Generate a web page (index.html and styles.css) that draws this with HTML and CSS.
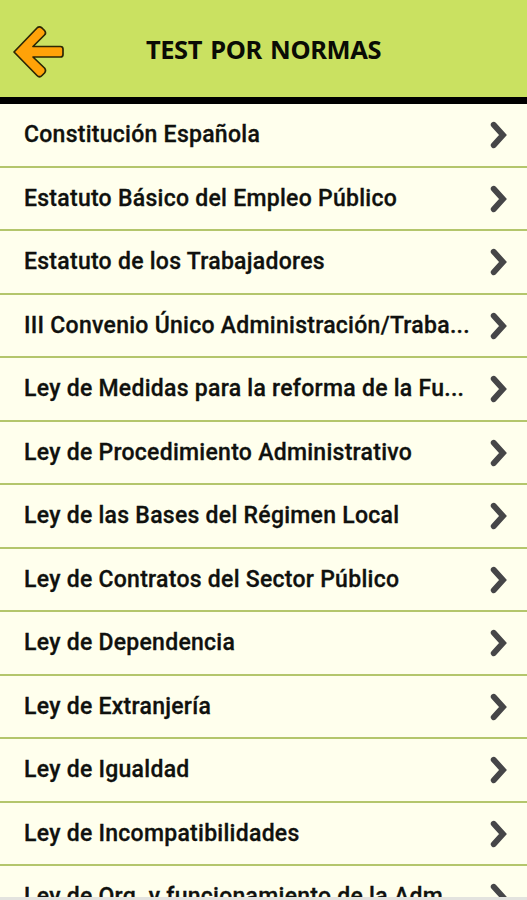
FILE: index.html
```
<!DOCTYPE html>
<html lang="es">
<head>
<meta charset="utf-8">
<title>Test por normas</title>
<link rel="stylesheet" href="styles.css">
</head>
<body>
<svg class="defs" width="0" height="0"><symbol id="chevron" viewBox="0 0 20 28"><path d="M4.7 3.7 14 14 4.7 24.3" fill="none" stroke="#464648" stroke-width="5.8" stroke-linecap="round" stroke-linejoin="miter"/></symbol></svg>
<div class="screen">
<header class="header">
<svg class="back" viewBox="0 0 54 54"><path d="M2 27 L25.5 2.5 Q27.5 .8 30 3 L32.5 5.5 Q34.5 8 32.5 10 L21 21.5 H48.5 Q51 21.5 51 24 V29.5 Q51 32 48.5 32 H21 L32.5 43 Q34.5 45.5 32.5 48 L30 50.5 Q27.5 53 25 50.5 Z" fill="#ffa208" stroke="#2c2705" stroke-width="1.7" stroke-linejoin="round"/></svg>
<h1 class="title">TEST POR NORMAS</h1>
</header>
<main class="list">
<div class="row"><span class="name">Constitución Española</span><svg class="chev"><use href="#chevron"/></svg></div>
<div class="row"><span class="name">Estatuto Básico del Empleo Público</span><svg class="chev"><use href="#chevron"/></svg></div>
<div class="row"><span class="name">Estatuto de los Trabajadores</span><svg class="chev"><use href="#chevron"/></svg></div>
<div class="row"><span class="name">III Convenio Único Administración/Traba...</span><svg class="chev"><use href="#chevron"/></svg></div>
<div class="row"><span class="name">Ley de Medidas para la reforma de la Fu...</span><svg class="chev"><use href="#chevron"/></svg></div>
<div class="row"><span class="name">Ley de Procedimiento Administrativo</span><svg class="chev"><use href="#chevron"/></svg></div>
<div class="row"><span class="name">Ley de las Bases del Régimen Local</span><svg class="chev"><use href="#chevron"/></svg></div>
<div class="row"><span class="name">Ley de Contratos del Sector Público</span><svg class="chev"><use href="#chevron"/></svg></div>
<div class="row"><span class="name">Ley de Dependencia</span><svg class="chev"><use href="#chevron"/></svg></div>
<div class="row"><span class="name">Ley de Extranjería</span><svg class="chev"><use href="#chevron"/></svg></div>
<div class="row"><span class="name">Ley de Igualdad</span><svg class="chev"><use href="#chevron"/></svg></div>
<div class="row"><span class="name">Ley de Incompatibilidades</span><svg class="chev"><use href="#chevron"/></svg></div>
<div class="row"><span class="name">Ley de Org. y funcionamiento de la Adm...</span><svg class="chev"><use href="#chevron"/></svg></div>
</main>
<div class="edge"></div>
</div>
</body>
</html>
```
FILE: styles.css
```
* { box-sizing: border-box; }
body { margin: 0; background: #ffffed; overflow: hidden; }
.defs { display: block; }
.screen { display: flex; flex-direction: column; width: 527px; height: 900px; overflow: hidden; }
.header {
  display: grid;
  grid-template-columns: 54px 1fr 54px;
  align-items: center;
  flex: none;
  height: 104px;
  padding: 0 12px;
  background: #cae161;
  border-bottom: 7px solid #000;
}
.back { width: 54px; height: 54px; margin-top: 6px; }
.title {
  margin: 0;
  text-align: center;
  white-space: nowrap;
  font: 700 25.5px/32px "Noto Sans", sans-serif;
  letter-spacing: -0.4px;
  word-spacing: 2px;
  color: #0a0c05;
}
.list { flex: 1; min-height: 0; overflow: hidden; }
.row {
  display: flex;
  align-items: center;
  justify-content: space-between;
  height: 63.52px;
  padding: 1px 18px 0 24px;
  border-bottom: 2px solid #b4c66c;
}
.name {
  font: 500 23px/30px Roboto, sans-serif;
  letter-spacing: 0.27px;
  white-space: nowrap;
  color: #10110e;
  -webkit-text-stroke: 0.3px #10110e;
}
.chev { flex: none; width: 20px; height: 28px; }
.edge { flex: none; height: 3px; background: #e3e3df; }
```
